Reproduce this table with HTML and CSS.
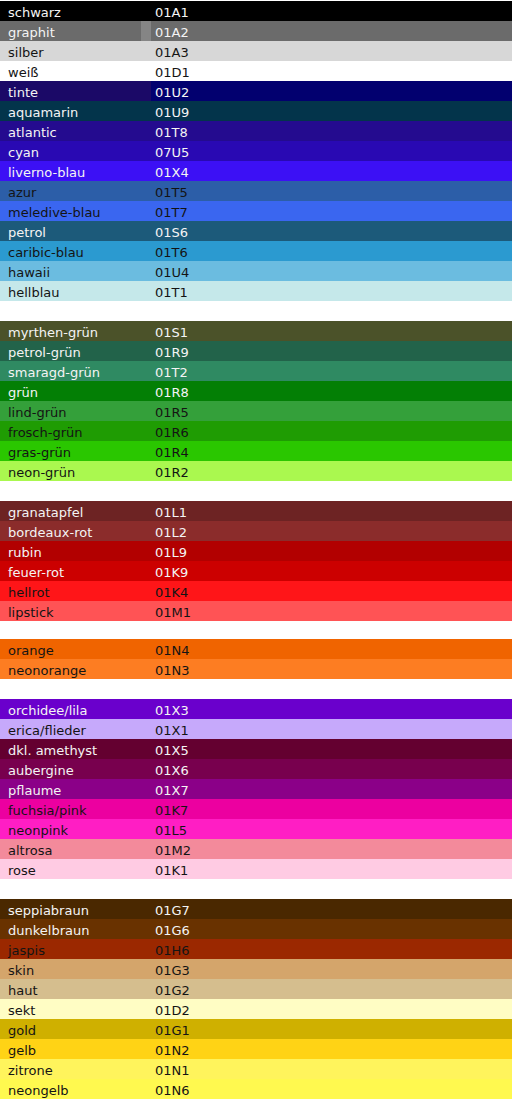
FILE: index.html
```html
<!DOCTYPE html>
<html lang="de">
<head>
<meta charset="utf-8">
<title>Farben</title>
<link rel="stylesheet" href="styles.css">
</head>
<body>
<div class="list">
  <div class="group">
    <div class="row c-schwarz"><span class="name">schwarz</span><span class="code">01A1</span></div>
    <div class="row c-graphit"><span class="name">graphit</span><span class="code">01A2</span></div>
    <div class="row c-silber dark"><span class="name">silber</span><span class="code">01A3</span></div>
    <div class="row c-weiss dark"><span class="name">weiß</span><span class="code">01D1</span></div>
    <div class="row c-tinte"><span class="name">tinte</span><span class="code">01U2</span></div>
    <div class="row c-aquamarin"><span class="name">aquamarin</span><span class="code">01U9</span></div>
    <div class="row c-atlantic"><span class="name">atlantic</span><span class="code">01T8</span></div>
    <div class="row c-cyan"><span class="name">cyan</span><span class="code">07U5</span></div>
    <div class="row c-liverno"><span class="name">liverno-blau</span><span class="code">01X4</span></div>
    <div class="row c-azur dark"><span class="name">azur</span><span class="code">01T5</span></div>
    <div class="row c-meledive dark"><span class="name">meledive-blau</span><span class="code">01T7</span></div>
    <div class="row c-petrol"><span class="name">petrol</span><span class="code">01S6</span></div>
    <div class="row c-caribic dark"><span class="name">caribic-blau</span><span class="code">01T6</span></div>
    <div class="row c-hawaii dark"><span class="name">hawaii</span><span class="code">01U4</span></div>
    <div class="row c-hellblau dark"><span class="name">hellblau</span><span class="code">01T1</span></div>
  </div>
  <div class="group">
    <div class="row c-myrthen"><span class="name">myrthen-grün</span><span class="code">01S1</span></div>
    <div class="row c-petrolgruen"><span class="name">petrol-grün</span><span class="code">01R9</span></div>
    <div class="row c-smaragd"><span class="name">smaragd-grün</span><span class="code">01T2</span></div>
    <div class="row c-gruen"><span class="name">grün</span><span class="code">01R8</span></div>
    <div class="row c-lind dark"><span class="name">lind-grün</span><span class="code">01R5</span></div>
    <div class="row c-frosch dark"><span class="name">frosch-grün</span><span class="code">01R6</span></div>
    <div class="row c-gras dark"><span class="name">gras-grün</span><span class="code">01R4</span></div>
    <div class="row c-neongruen dark"><span class="name">neon-grün</span><span class="code">01R2</span></div>
  </div>
  <div class="group">
    <div class="row c-granat"><span class="name">granatapfel</span><span class="code">01L1</span></div>
    <div class="row c-bordeaux"><span class="name">bordeaux-rot</span><span class="code">01L2</span></div>
    <div class="row c-rubin"><span class="name">rubin</span><span class="code">01L9</span></div>
    <div class="row c-feuer"><span class="name">feuer-rot</span><span class="code">01K9</span></div>
    <div class="row c-hellrot dark"><span class="name">hellrot</span><span class="code">01K4</span></div>
    <div class="row c-lipstick dark"><span class="name">lipstick</span><span class="code">01M1</span></div>
  </div>
  <div class="group group-tight">
    <div class="row c-orange dark"><span class="name">orange</span><span class="code">01N4</span></div>
    <div class="row c-neonorange dark"><span class="name">neonorange</span><span class="code">01N3</span></div>
  </div>
  <div class="group">
    <div class="row c-orchidee"><span class="name">orchidee/lila</span><span class="code">01X3</span></div>
    <div class="row c-erica dark"><span class="name">erica/flieder</span><span class="code">01X1</span></div>
    <div class="row c-amethyst"><span class="name">dkl. amethyst</span><span class="code">01X5</span></div>
    <div class="row c-aubergine"><span class="name">aubergine</span><span class="code">01X6</span></div>
    <div class="row c-pflaume"><span class="name">pflaume</span><span class="code">01X7</span></div>
    <div class="row c-fuchsia dark"><span class="name">fuchsia/pink</span><span class="code">01K7</span></div>
    <div class="row c-neonpink dark"><span class="name">neonpink</span><span class="code">01L5</span></div>
    <div class="row c-altrosa dark"><span class="name">altrosa</span><span class="code">01M2</span></div>
    <div class="row c-rose dark"><span class="name">rose</span><span class="code">01K1</span></div>
  </div>
  <div class="group">
    <div class="row c-seppia"><span class="name">seppiabraun</span><span class="code">01G7</span></div>
    <div class="row c-dunkelbraun"><span class="name">dunkelbraun</span><span class="code">01G6</span></div>
    <div class="row c-jaspis dark"><span class="name">jaspis</span><span class="code">01H6</span></div>
    <div class="row c-skin dark"><span class="name">skin</span><span class="code">01G3</span></div>
    <div class="row c-haut dark"><span class="name">haut</span><span class="code">01G2</span></div>
    <div class="row c-sekt dark"><span class="name">sekt</span><span class="code">01D2</span></div>
    <div class="row c-gold dark"><span class="name">gold</span><span class="code">01G1</span></div>
    <div class="row c-gelb dark"><span class="name">gelb</span><span class="code">01N2</span></div>
    <div class="row c-zitrone dark"><span class="name">zitrone</span><span class="code">01N1</span></div>
    <div class="row c-neongelb dark"><span class="name">neongelb</span><span class="code">01N6</span></div>
  </div>
</div>
</body>
</html>
```

FILE: styles.css
```css
html, body {
  margin: 0;
  padding: 0;
  background: #ffffff;
}

body {
  padding-top: 1px;
  font-family: "DejaVu Sans", Verdana, sans-serif;
  font-size: 13px;
}

.list {
  display: flex;
  flex-direction: column;
  gap: 20px;
}

.group-tight {
  margin-top: -2px;
}

.row {
  display: grid;
  grid-template-columns: 151px 1fr;
  height: 20px;
  color: #f4f4f4;
  white-space: nowrap;
}

.row.dark {
  color: #141414;
}

.name,
.code {
  padding-top: 3px;
  line-height: 17px;
}

.name {
  padding-left: 8px;
}

.code {
  padding-left: 4px;
}

.c-schwarz { background: #000000; }
.c-graphit { background: #6b6b6b; }
.c-graphit .name { background: linear-gradient(to right, #6b6b6b 141px, #858585 141px); }
.c-silber { background: #d7d7d7; }
.c-weiss { background: #ffffff; }
.c-tinte { background: #02006f; }
.c-tinte .name { background: #1b0967; }
.c-aquamarin { background: #03344b; }
.c-atlantic { background: #240b8f; }
.c-cyan { background: #2909b3; }
.c-liverno { background: #3c10f5; }
.c-azur { background: #2c5ea8; }
.c-meledive { background: #3a66f0; }
.c-petrol { background: #1c5a7a; }
.c-caribic { background: #2b9ad0; }
.c-hawaii { background: #6bbce0; }
.c-hellblau { background: #c5e8ea; }

.c-myrthen { background: #4b5229; }
.c-petrolgruen { background: #22634a; }
.c-smaragd { background: #2f8a62; }
.c-gruen { background: #037f05; }
.c-lind { background: #34a03a; }
.c-frosch { background: #1f9c03; }
.c-gras { background: #2ac700; }
.c-neongruen { background: #aaf84f; }

.c-granat { background: #6d2323; }
.c-bordeaux { background: #8b2c2b; }
.c-rubin { background: #b20000; }
.c-feuer { background: #cc0000; }
.c-hellrot { background: #ff1518; }
.c-lipstick { background: #ff5355; }

.c-orange { background: #f06400; }
.c-neonorange { background: #fd7d22; }

.c-orchidee { background: #6a00cc; }
.c-erica { background: #c6a9fb; }
.c-amethyst { background: #640030; }
.c-aubergine { background: #78004e; }
.c-pflaume { background: #8b0088; }
.c-fuchsia { background: #ec00a0; }
.c-neonpink { background: #ff1ec4; }
.c-altrosa { background: #f38a9b; }
.c-rose { background: #ffcbe3; }

.c-seppia { background: #4a2800; }
.c-dunkelbraun { background: #693200; }
.c-jaspis { background: #9b2800; }
.c-skin { background: #d4a56b; }
.c-haut { background: #d5be8e; }
.c-sekt { background: #fffdc4; }
.c-gold { background: #cfb000; }
.c-gelb { background: #ffd315; }
.c-zitrone { background: #fff45c; }
.c-neongelb { background: #fff94f; }
```
